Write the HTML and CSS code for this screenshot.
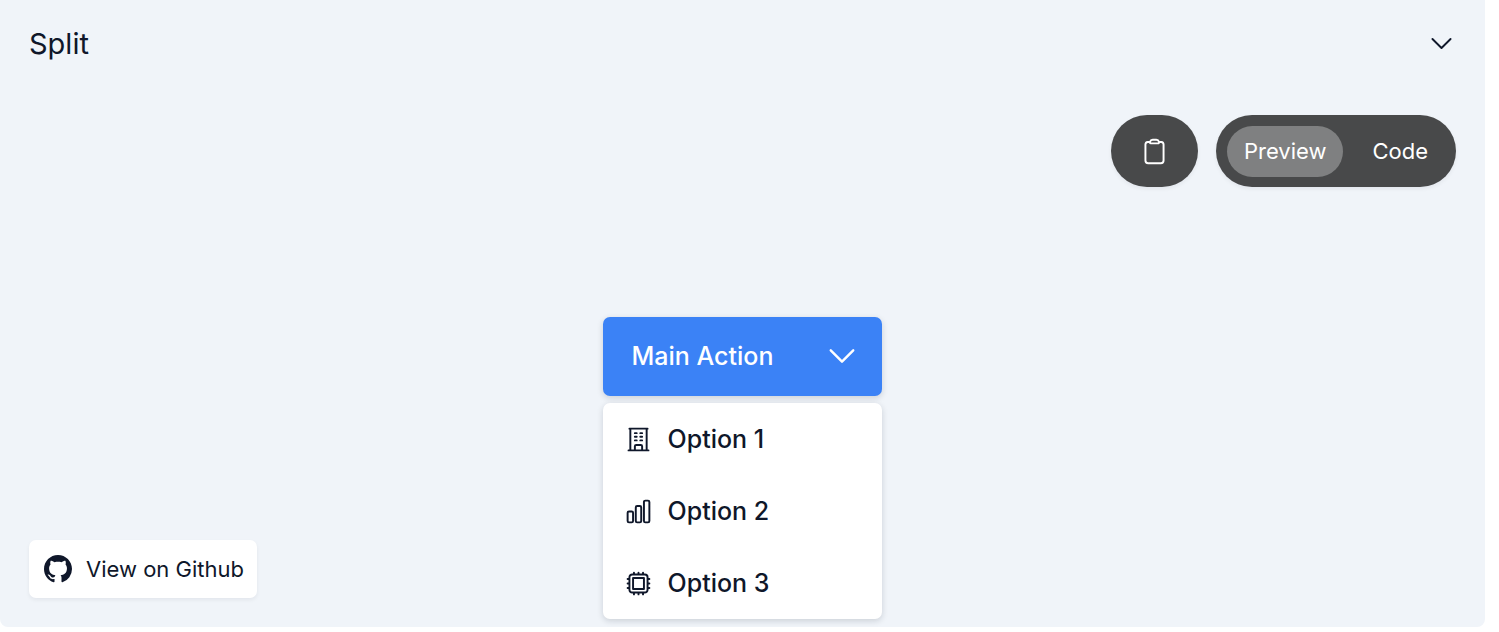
FILE: index.html
```html
<!DOCTYPE html>
<html lang="en">
<head>
<meta charset="utf-8">
<meta name="viewport" content="width=device-width, initial-scale=1">
<title>Split</title>
<link rel="stylesheet" href="styles.css">
</head>
<body>
<main class="panel">
  <header class="panel-header">
    <h1 class="panel-title">Split</h1>
    <button class="collapse" type="button" aria-label="Collapse section">
      <svg class="icon" viewBox="0 0 24 24" aria-hidden="true"><path d="M19.5 8.25l-7.5 7.5-7.5-7.5"/></svg>
    </button>
  </header>
  <div class="toolbar">
    <button class="copy" type="button" aria-label="Copy code">
      <svg class="icon" viewBox="0 0 24 24" aria-hidden="true"><path d="M15.666 3.888A2.25 2.25 0 0013.5 2.25h-3c-1.03 0-1.9.693-2.166 1.638m7.332 0c.055.194.084.4.084.612v0a.75.75 0 01-.75.75H9a.75.75 0 01-.75-.75v0c0-.212.03-.418.084-.612m7.332 0c.646.049 1.288.11 1.927.184 1.1.128 1.907 1.077 1.907 2.185V19.5a2.25 2.25 0 01-2.25 2.25H6.75A2.25 2.25 0 014.5 19.5V6.257c0-1.108.806-2.057 1.907-2.185a48.208 48.208 0 011.927-.184"/></svg>
    </button>
    <div class="tabs">
      <button class="tab tab-active" type="button" aria-pressed="true">Preview</button>
      <button class="tab" type="button" aria-pressed="false">Code</button>
    </div>
  </div>
  <div class="stage">
    <div class="split">
      <div class="split-button">
        <button class="split-main" type="button">Main Action</button>
        <button class="split-toggle" type="button" aria-label="More options" aria-expanded="true">
          <svg class="icon icon-large" viewBox="0 0 24 24" aria-hidden="true"><path d="M19.5 8.25l-7.5 7.5-7.5-7.5"/></svg>
        </button>
      </div>
      <div class="menu">
        <button class="menu-item" type="button">
          <svg class="icon" viewBox="0 0 24 24" aria-hidden="true"><path d="M3.75 21h16.5M4.5 3h15M5.25 3v18m13.5-18v18M9 6.75h1.5m-1.5 3h1.5m-1.5 3h1.5m3-6H15m-1.5 3H15m-1.5 3H15M9 21v-3.375c0-.621.504-1.125 1.125-1.125h3.75c.621 0 1.125.504 1.125 1.125V21"/></svg>
          Option 1
        </button>
        <button class="menu-item" type="button">
          <svg class="icon" viewBox="0 0 24 24" aria-hidden="true"><path d="M3 13.125C3 12.504 3.504 12 4.125 12h2.25c.621 0 1.125.504 1.125 1.125v6.75C7.5 20.496 6.996 21 6.375 21h-2.25A1.125 1.125 0 013 19.875v-6.75zM9.75 8.625c0-.621.504-1.125 1.125-1.125h2.25c.621 0 1.125.504 1.125 1.125v11.25c0 .621-.504 1.125-1.125 1.125h-2.25a1.125 1.125 0 01-1.125-1.125V8.625zM16.5 4.125c0-.621.504-1.125 1.125-1.125h2.25C20.496 3 21 3.504 21 4.125v15.75c0 .621-.504 1.125-1.125 1.125h-2.25a1.125 1.125 0 01-1.125-1.125V4.125z"/></svg>
          Option 2
        </button>
        <button class="menu-item" type="button">
          <svg class="icon" viewBox="0 0 24 24" aria-hidden="true"><path d="M8.25 3v1.5M4.5 8.25H3m18 0h-1.5M4.5 12H3m18 0h-1.5m-15 3.75H3m18 0h-1.5M8.25 19.5V21M12 3v1.5m0 15V21m3.75-18v1.5m0 15V21m-9-1.5h10.5a2.25 2.25 0 002.25-2.25V6.75a2.25 2.25 0 00-2.25-2.25H6.75A2.25 2.25 0 004.5 6.75v10.5a2.25 2.25 0 002.25 2.25zm.75-12h9v9h-9v-9z"/></svg>
          Option 3
        </button>
      </div>
    </div>
  </div>
  <footer class="panel-footer">
    <a class="github" href="#">
      <svg class="github-mark" viewBox="0 0 16 16" aria-hidden="true"><path d="M8 0C3.58 0 0 3.58 0 8c0 3.54 2.29 6.53 5.47 7.59.4.07.55-.17.55-.38 0-.19-.01-.82-.01-1.49-2.01.37-2.53-.49-2.69-.94-.09-.23-.48-.94-.82-1.13-.28-.15-.68-.52-.01-.53.63-.01 1.08.58 1.23.82.72 1.21 1.87.87 2.33.66.07-.52.28-.87.51-1.07-1.78-.2-3.64-.89-3.64-3.95 0-.87.31-1.59.82-2.15-.08-.2-.36-1.02.08-2.12 0 0 .67-.21 2.2.82.64-.18 1.32-.27 2-.27s1.36.09 2 .27c1.53-1.04 2.2-.82 2.2-.82.44 1.1.16 1.92.08 2.12.51.56.82 1.27.82 2.15 0 3.07-1.87 3.75-3.65 3.95.29.25.54.73.54 1.48 0 1.07-.01 1.93-.01 2.2 0 .21.15.46.55.38A8.01 8.01 0 0016 8c0-4.42-3.58-8-8-8z"/></svg>
      View on Github
    </a>
  </footer>
</main>
</body>
</html>
```
FILE: styles.css
```css
* {
  box-sizing: border-box;
}

body {
  margin: 0;
  padding: 0 14px 5px 0;
  min-height: 100vh;
  display: flex;
  background: #fff;
  color: #0f172a;
  font-family: Inter, "Liberation Sans", sans-serif;
}

button {
  margin: 0;
  padding: 0;
  border: 0;
  background: none;
  color: inherit;
  font: inherit;
  cursor: pointer;
}

.icon {
  display: block;
  flex: none;
  width: 29px;
  height: 29px;
  fill: none;
  stroke: currentColor;
  stroke-width: 1.6;
  stroke-linecap: round;
  stroke-linejoin: round;
}

.icon-large {
  width: 36px;
  height: 36px;
}

.panel {
  flex: 1;
  display: flex;
  flex-direction: column;
  background: #f0f4f9;
  border-radius: 0 0 8px 8px;
}

.panel-header {
  display: flex;
  align-items: center;
  justify-content: space-between;
  padding: 22px 29px;
}

.panel-title {
  margin: 0;
  font-size: 29px;
  line-height: 43px;
  font-weight: 400;
}

.toolbar {
  display: flex;
  justify-content: flex-end;
  gap: 18px;
  padding: 28px 29px 0;
}

.copy,
.tabs {
  background: #48494a;
  color: #fff;
  border-radius: 36px;
  box-shadow: 0 2px 4px rgba(15, 23, 42, 0.06);
}

.copy {
  display: flex;
  align-items: center;
  padding: 0 29px;
}

.tabs {
  display: flex;
  gap: 12px;
  padding: 11px 11px 10px;
}

.tab {
  padding: 0 17px;
  border-radius: 26px;
  font-size: 22px;
  line-height: 51px;
  font-weight: 400;
}

.tab-active {
  background: #7f8081;
}

.stage {
  flex: 1;
  display: flex;
  justify-content: center;
  align-items: flex-start;
  padding-top: 130px;
}

.split {
  position: relative;
}

.split-button {
  display: flex;
  background: #3b82f6;
  color: #fff;
  border-radius: 7px;
  box-shadow: 0 2px 6px rgba(15, 23, 42, 0.16);
}

.split-main {
  padding: 0 29px;
  font-size: 25px;
  line-height: 79px;
  font-weight: 500;
}

.split-toggle {
  padding: 0 22px;
}

.split-toggle .icon {
  margin-bottom: 2px;
}

.menu {
  position: absolute;
  top: 100%;
  left: 0;
  right: 0;
  margin-top: 7px;
  background: #fff;
  border-radius: 7px;
  box-shadow: 0 2px 6px rgba(15, 23, 42, 0.16);
}

.menu-item {
  display: flex;
  align-items: center;
  gap: 15px;
  width: 100%;
  padding: 0 21px;
  font-size: 25px;
  line-height: 72px;
  font-weight: 500;
}

.panel-footer {
  display: flex;
  padding: 0 29px 29px;
}

.github {
  display: flex;
  align-items: center;
  gap: 14px;
  padding: 0 13px 0 15px;
  background: #fff;
  border-radius: 7px;
  box-shadow: 0 2px 4px rgba(15, 23, 42, 0.06);
  color: inherit;
  font-size: 22px;
  line-height: 58px;
  font-weight: 400;
  text-decoration: none;
}

.github-mark {
  width: 28px;
  height: 28px;
  fill: currentColor;
}
```
